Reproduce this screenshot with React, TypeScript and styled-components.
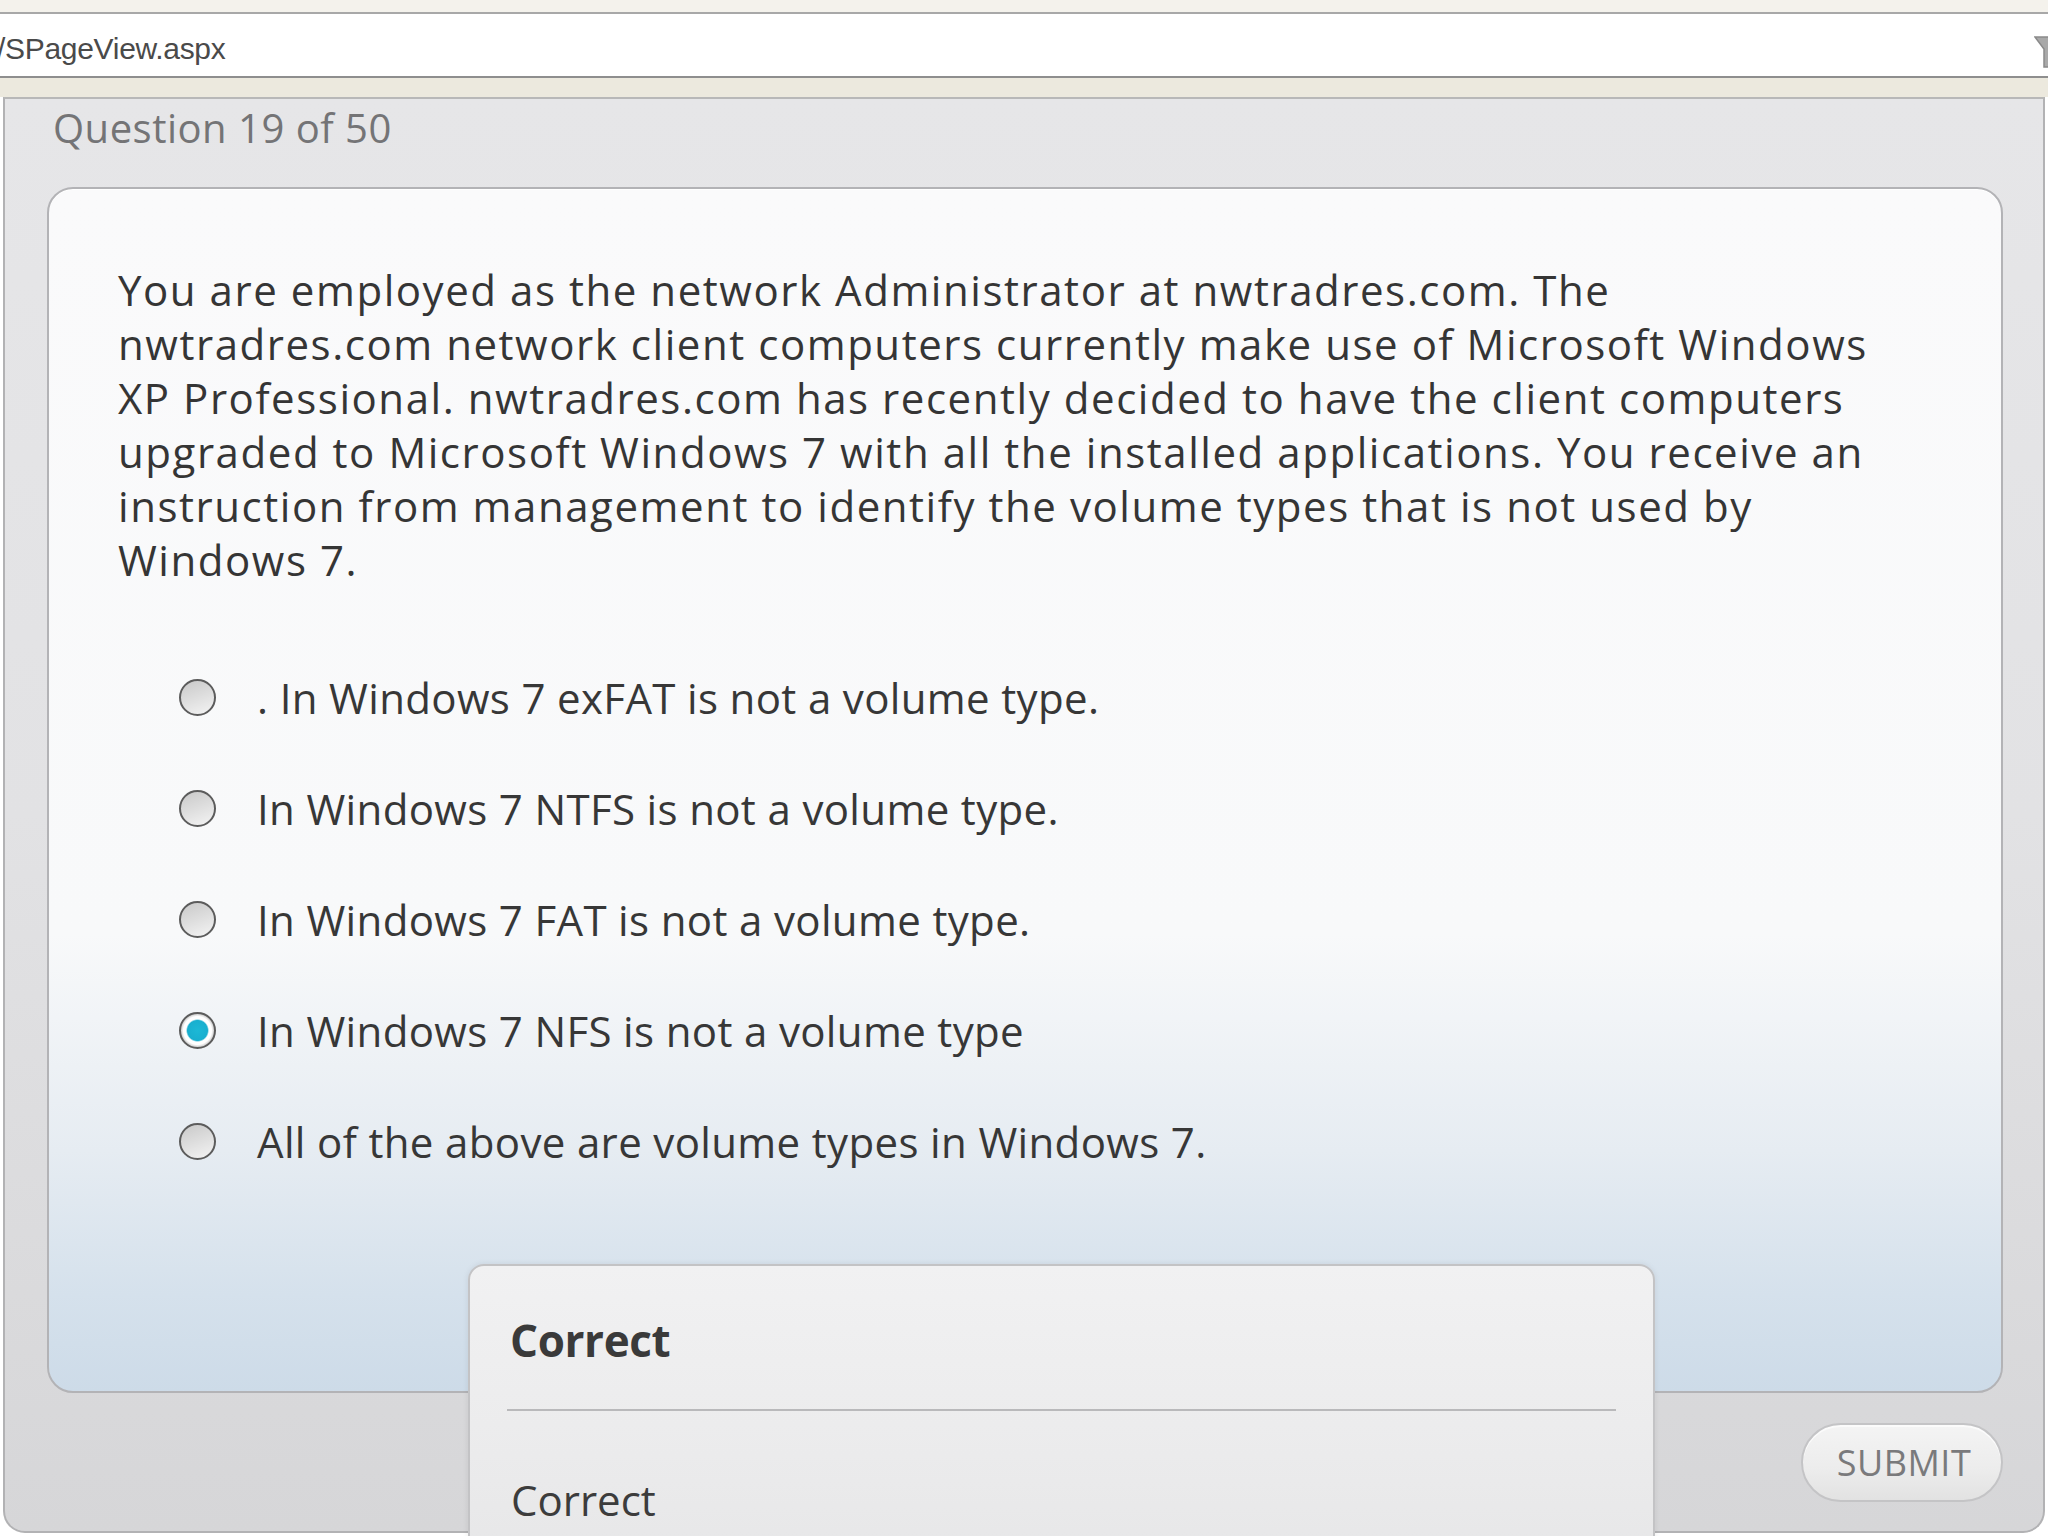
import styled, { createGlobalStyle, css } from "styled-components";

const GlobalStyle = createGlobalStyle`
  html, body {
    margin: 0;
    padding: 0;
    background: #ffffff;
  }
  * {
    box-sizing: border-box;
  }
`;

const Screen = styled.div`
  width: 2048px;
  height: 1536px;
  overflow: hidden;
  background: #f4f2ec;
  font-family: "Open Sans", "Noto Sans", sans-serif;
  display: flex;
  flex-direction: column;
`;

const TopStrip = styled.div`
  height: 12px;
  background: #f4f2ec;
`;

const AddressBar = styled.div`
  height: 66px;
  background: #ffffff;
  border-top: 2px solid #a8a8a8;
  border-bottom: 2px solid #8e8e8e;
  display: flex;
  align-items: flex-start;
  justify-content: space-between;
  padding-top: 19px;
  overflow: hidden;
`;

const Url = styled.span`
  font-family: "Liberation Sans", Arial, sans-serif;
  font-size: 30px;
  line-height: 31px;
  color: #4a4a4a;
  margin-left: -3px;
  letter-spacing: -0.3px;
`;

const FunnelIcon = styled.svg`
  width: 26px;
  height: 34px;
  margin-right: -12px;
  margin-top: 2px;
`;

const ToolStrip = styled.div`
  height: 19px;
  background: #ece9de;
`;

const Frame = styled.div`
  flex: 1;
  background: #ffffff;
  padding: 0 3px 0 3px;
`;

const Panel = styled.div`
  position: relative;
  width: 2042px;
  height: 1436px;
  border: 2px solid #b2b2b4;
  border-top-color: #b8b8b8;
  border-radius: 0 0 22px 22px;
  background: linear-gradient(180deg, #e6e6e8 0%, #e2e2e4 50%, #d6d6d8 100%);
  display: flex;
  flex-direction: column;
`;

const Counter = styled.div`
  padding: 2px 0 32px 48px;
  font-size: 40px;
  line-height: 54px;
  color: #747476;
  letter-spacing: 0.5px;
`;

const Card = styled.div`
  margin: 0 40px 0 42px;
  height: 1206px;
  border: 2px solid #b3b3b6;
  border-radius: 26px;
  background: linear-gradient(
    180deg,
    #fafafb 0%,
    #f8f9fa 62%,
    #e6ecf2 80%,
    #d5e1ec 92%,
    #cddbe8 100%
  );
  padding: 74px 30px 0 69px;
  box-shadow: inset 0 1px 0 #ffffff;
`;

const Question = styled.p`
  margin: 0;
  font-size: 42px;
  line-height: 54px;
  color: #353535;
  letter-spacing: 1.55px;
  white-space: nowrap;
`;

const OptionList = styled.div`
  margin-top: 55px;
  padding-left: 61px;
  display: flex;
  flex-direction: column;
`;

const OptionRow = styled.label`
  height: 111px;
  display: flex;
  align-items: center;
  gap: 41px;
`;

const Radio = styled.span<{ checked: boolean }>`
  width: 37px;
  height: 37px;
  flex: none;
  border-radius: 50%;
  border: 2px solid #5c5c5c;
  background: linear-gradient(160deg, #c9c9c9 0%, #dedede 50%, #f4f4f4 100%);
  ${({ checked }) =>
    checked &&
    css`
      background: radial-gradient(
        circle,
        #1cb8d6 0,
        #19afcf 10px,
        #ffffff 11.5px,
        #ffffff 14px,
        #cfcfcf 16.5px
      );
    `}
`;

const OptionText = styled.span`
  font-size: 42px;
  line-height: 54px;
  color: #373737;
  letter-spacing: 0.35px;
`;

const Footer = styled.div`
  display: flex;
  justify-content: flex-end;
  padding: 30px 40px 0 0;
`;

const SubmitButton = styled.button`
  width: 202px;
  height: 79px;
  border-radius: 40px;
  border: 2px solid #c4c4c6;
  background: linear-gradient(180deg, #f4f4f4 0%, #ececec 60%, #e2e2e2 100%);
  box-shadow: inset 0 2px 0 #fbfbfb;
  font-family: "Open Sans", "Noto Sans", sans-serif;
  font-size: 36px;
  color: #7a7a7c;
  letter-spacing: 0.5px;
  padding: 0 0 0 4px;
`;

const Feedback = styled.div`
  position: absolute;
  left: 463px;
  top: 1165px;
  width: 1187px;
  height: 320px;
  border: 2px solid #c3c3c5;
  border-radius: 16px 16px 0 0;
  background: linear-gradient(180deg, #f1f1f2 0%, #ebebec 60%, #e6e6e7 100%);
  box-shadow: 0 0 6px rgba(0, 0, 0, 0.08);
  padding: 44px 37px 0 37px;
`;

const FeedbackTitle = styled.div`
  padding-left: 3px;
  font-size: 44px;
  font-weight: 700;
  line-height: 60px;
  color: #3a3a3a;
  letter-spacing: -0.4px;
`;

const Divider = styled.hr`
  margin: 39px 0 0 0;
  border: none;
  height: 2px;
  background: #b9b9bb;
`;

const FeedbackBody = styled.div`
  margin-top: 62px;
  padding-left: 4px;
  font-size: 42px;
  line-height: 54px;
  color: #3c3c3c;
`;

const options = [
  ". In Windows 7 exFAT is not a volume type.",
  "In Windows 7 NTFS is not a volume type.",
  "In Windows 7 FAT is not a volume type.",
  "In Windows 7 NFS is not a volume type",
  "All of the above are volume types in Windows 7.",
];

const questionLines = [
  "You are employed as the network Administrator at nwtradres.com. The",
  "nwtradres.com network client computers currently make use of Microsoft Windows",
  "XP Professional. nwtradres.com has recently decided to have the client computers",
  "upgraded to Microsoft Windows 7 with all the installed applications. You receive an",
  "instruction from management to identify the volume types that is not used by",
  "Windows 7.",
];

export default function App() {
  const selected = 3;
  return (
    <Screen>
      <GlobalStyle />
      <TopStrip />
      <AddressBar>
        <Url>/SPageView.aspx</Url>
        <FunnelIcon viewBox="0 0 26 34">
          <path d="M1 2 L25 2 L16 14 L16 32 L10 32 L10 14 Z" fill="#a9a9a9" stroke="#8a8a8a" strokeWidth="1.5" />
        </FunnelIcon>
      </AddressBar>
      <ToolStrip />
      <Frame>
        <Panel>
          <Counter>Question 19 of 50</Counter>
          <Card>
            <Question>
              {questionLines.map((line, i) => (
                <span key={i}>
                  {line}
                  {i < questionLines.length - 1 && <br />}
                </span>
              ))}
            </Question>
            <OptionList>
              {options.map((text, i) => (
                <OptionRow key={i}>
                  <Radio checked={i === selected} />
                  <OptionText>{text}</OptionText>
                </OptionRow>
              ))}
            </OptionList>
          </Card>
          <Footer>
            <SubmitButton>SUBMIT</SubmitButton>
          </Footer>
          <Feedback>
            <FeedbackTitle>Correct</FeedbackTitle>
            <Divider />
            <FeedbackBody>Correct</FeedbackBody>
          </Feedback>
        </Panel>
      </Frame>
    </Screen>
  );
}
